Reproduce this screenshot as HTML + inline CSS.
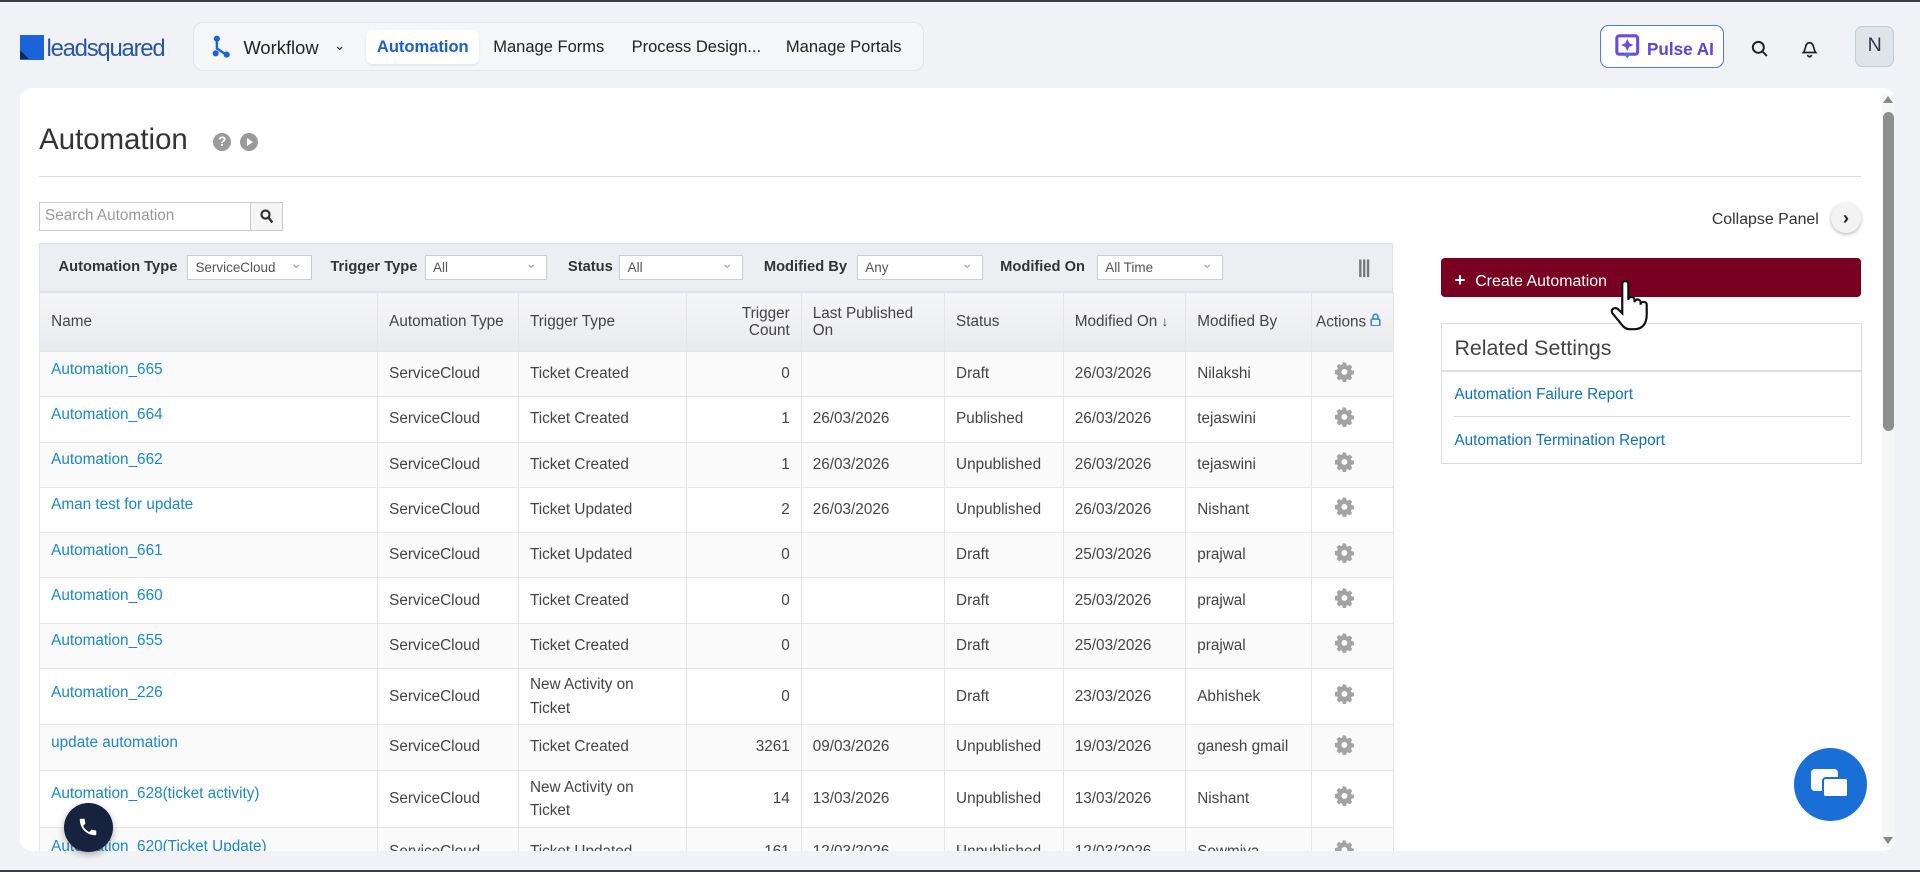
<!DOCTYPE html>
<html><head><meta charset="utf-8">
<style>
*{box-sizing:border-box;margin:0;padding:0}
html,body{width:1920px;height:872px;overflow:hidden;background:#eff1f5}
#w{zoom:1.22449;width:1568px;height:712px;position:relative;font-family:"Liberation Sans",sans-serif;color:#333;background:#f0f2f6;border-top:2px solid #3a3d42;border-bottom:2px solid #3a3d42}
.a{position:absolute}
.nav{left:158px;top:16px;width:597px;height:40px;background:#f5f6f8;border:1px solid #e2e5ea;border-radius:8px}
.nav span{position:absolute;top:12px;font-size:14px;color:#222}
.act{left:140px;top:6px;width:92px;height:28px;background:#fff;border-radius:5px;box-shadow:0 1px 2px rgba(0,0,0,.08)}
.card{left:16px;top:70px;width:1532px;height:623px;background:#fff;border-radius:10px;overflow:hidden}
table{border-collapse:collapse;font-size:12.5px;table-layout:fixed}
td,th{border:1px solid #e6e6e6;padding:0 9px;vertical-align:middle;color:#444;font-weight:normal}
th{background:linear-gradient(#f6f6f8,#e9eaed);height:48px;text-align:left;color:#444;font-size:12.5px}
td{height:37px}
tr:nth-child(even) td{background:#fafafa}
td.n{vertical-align:top;padding-top:7px;color:#1d87c9;padding-left:9px}
td.r{text-align:right}
.g{text-align:left;padding:0 0 0 18px}
.sel{position:absolute;top:9px;height:20px;background:#fff;border:1px solid #ccc;font-size:11px;color:#555;padding:3px 6px}
.sel:after{content:"⌄";position:absolute;right:7px;top:-1px;color:#aaa;font-size:12px}
.lb{position:absolute;top:12px;font-size:12px;font-weight:bold;color:#333}
</style></head><body><div id="w">
<svg width="0" height="0" style="position:absolute"><defs><g id="gear"><path d="M10 1.5l1.6.3.4 2.2 1.3.6 1.9-1.2 2.3 2.3-1.2 1.9.6 1.3 2.2.4v3.4l-2.2.4-.6 1.3 1.2 1.9-2.3 2.3-1.9-1.2-1.3.6-.4 2.2H8.4l-.4-2.2-1.3-.6-1.9 1.2-2.3-2.3 1.2-1.9-.6-1.3-2.2-.4V8.7l2.2-.4.6-1.3-1.2-1.9 2.3-2.3 1.9 1.2 1.3-.6.4-2.2z" fill="#a3a3a3" transform="scale(.85)"/><circle cx="8.5" cy="8.9" r="2.4" fill="#fff"/></g></defs></svg>
<div class="a" style="left:16px;top:27px;width:20px;height:20px;background:#1b64d8"></div>
<div class="a" style="left:16px;top:39px;width:0;height:0;border-left:8px solid #0d2a5a;border-top:8px solid transparent"></div>
<div class="a" style="left:38px;top:27px;font-size:19.5px;color:#2a56a8;letter-spacing:-1px">leadsquared</div>
<div class="a nav">
 <svg class="a" style="left:14px;top:10px" width="16" height="20" viewBox="0 0 16 20"><circle cx="4" cy="3" r="2.5" fill="#1b64d8"/><path d="M4 5v6l6 4" stroke="#1b64d8" stroke-width="2" fill="none"/><circle cx="3" cy="15" r="2.5" fill="#1b64d8"/><circle cx="12" cy="16" r="2.5" fill="#1b64d8"/></svg>
 <span style="left:40px;font-size:15px">Workflow</span><span style="left:114px;font-size:11px;top:13px">⌄</span>
 <div class="a act"></div>
 <span style="left:149px;color:#1a5fd0;font-weight:bold;font-size:13.5px">Automation</span>
 <span style="left:244px;font-size:13.5px">Manage Forms</span>
 <span style="left:357px;font-size:13.5px">Process Design...</span>
 <span style="left:483px;font-size:13.5px">Manage Portals</span>
</div>
<div class="a" style="left:1307px;top:19px;width:101px;height:35px;border:1.5px solid #4a7be0;border-radius:7px;background:#fff"></div>
<svg class="a" style="left:1319px;top:26px" width="20" height="22" viewBox="0 0 20 22"><rect x="1.5" y="1.5" width="17" height="15" rx="2" fill="none" stroke="#6a4ae0" stroke-width="2.5"/><path d="M10 4l1.5 3.5L15 9l-3.5 1.5L10 14l-1.5-3.5L5 9l3.5-1.5z" fill="#6a4ae0"/><path d="M7 16l3 4 3-4" fill="#4a7be0"/></svg>
<div class="a" style="left:1345px;top:30px;font-size:14px;font-weight:bold;color:#5a45d8">Pulse AI</div>
<svg class="a" style="left:1430px;top:31px" width="14" height="14" viewBox="0 0 14 14"><circle cx="6" cy="6" r="4.5" stroke="#222" stroke-width="1.6" fill="none"/><path d="M9.5 9.5L13 13" stroke="#222" stroke-width="1.6"/></svg>
<svg class="a" style="left:1471px;top:30px" width="14" height="16" viewBox="0 0 14 16"><path d="M2 11c2-2 1-8 5-8s3 6 5 8z" stroke="#222" stroke-width="1.4" fill="none"/><path d="M5.5 13a1.5 1.5 0 003 0" stroke="#222" stroke-width="1.4" fill="none"/></svg>
<div class="a" style="left:1515px;top:20px;width:32px;height:33px;background:#dfe4eb;border:1px solid #c4cad3;border-radius:6px;text-align:center;line-height:31px;font-size:16px;color:#334">N</div>

<div class="a card">
 <div class="a" style="left:16px;top:29px;font-size:24px;color:#333">Automation</div>
 <div class="a" style="left:158px;top:37px;width:15px;height:15px;border-radius:50%;background:#9a9a9a;color:#fff;font-size:11px;text-align:center;line-height:15px;font-weight:bold">?</div>
 <div class="a" style="left:180px;top:37px;width:15px;height:15px;border-radius:50%;background:#9a9a9a"></div>
 <div class="a" style="left:186px;top:41px;border-left:5px solid #fff;border-top:3.5px solid transparent;border-bottom:3.5px solid transparent"></div>
 <div class="a" style="left:16px;top:72px;width:1488px;height:1px;background:#ddd"></div>
 <div class="a" style="left:16px;top:93px;width:173px;height:24px;border:1px solid #ccc;font-size:12.5px;color:#999;padding:4px 4px">Search Automation</div>
 <div class="a" style="left:188px;top:93px;width:27px;height:24px;border:1px solid #ccc;background:#f5f5f5"></div>
 <svg class="a" style="left:196px;top:99px" width="11" height="12" viewBox="0 0 11 12"><circle cx="4.5" cy="4.5" r="3.3" stroke="#333" stroke-width="1.8" fill="none"/><path d="M7 7l3 4" stroke="#333" stroke-width="2"/></svg>
 <div class="a" style="left:16px;top:127px;width:1106px;height:40px;background:#eceef1;border:1px solid #dfe1e5">
  <span class="lb" style="left:15px">Automation Type</span><div class="sel" style="left:120px;width:102px">ServiceCloud</div>
  <span class="lb" style="left:237px">Trigger Type</span><div class="sel" style="left:314px;width:100px">All</div>
  <span class="lb" style="left:431px">Status</span><div class="sel" style="left:473px;width:101px">All</div>
  <span class="lb" style="left:591px">Modified By</span><div class="sel" style="left:667px;width:103px">Any</div>
  <span class="lb" style="left:784px">Modified On</span><div class="sel" style="left:863px;width:103px">All Time</div>
  <span class="a" style="left:1076px;top:10px;font-size:15px;color:#777;font-weight:bold;letter-spacing:-1px">|||</span>
 </div>
 <table class="a" style="left:16px;top:167px;width:1106px">
  <colgroup><col style="width:276px"><col style="width:115px"><col style="width:137px"><col style="width:94px"><col style="width:117px"><col style="width:97px"><col style="width:100px"><col style="width:103px"><col style="width:67px"></colgroup>
  <tr><th>Name</th><th>Automation Type</th><th>Trigger Type</th><th style="text-align:right;line-height:14px">Trigger<br>Count</th><th style="line-height:14px">Last Published<br>On</th><th>Status</th><th>Modified On <span style="font-size:11px">↓</span></th><th>Modified By</th><th style="padding:0 3px;white-space:nowrap">Actions <svg width="9" height="11" viewBox="0 0 9 11"><rect x="1" y="5" width="7" height="5.5" rx="1" fill="none" stroke="#3a86d8" stroke-width="1.3"/><path d="M2.5 5V3a2 2 0 014 0v2" fill="none" stroke="#3a86d8" stroke-width="1.3"/></svg></th></tr>
  <tr><td class="n">Automation_665</td><td>ServiceCloud</td><td>Ticket Created</td><td class="r">0</td><td></td><td>Draft</td><td>26/03/2026</td><td>Nilakshi</td><td class="g"><svg width="18" height="18"><use href="#gear"/></svg></td></tr>
  <tr><td class="n">Automation_664</td><td>ServiceCloud</td><td>Ticket Created</td><td class="r">1</td><td>26/03/2026</td><td>Published</td><td>26/03/2026</td><td>tejaswini</td><td class="g"><svg width="18" height="18"><use href="#gear"/></svg></td></tr>
  <tr><td class="n">Automation_662</td><td>ServiceCloud</td><td>Ticket Created</td><td class="r">1</td><td>26/03/2026</td><td>Unpublished</td><td>26/03/2026</td><td>tejaswini</td><td class="g"><svg width="18" height="18"><use href="#gear"/></svg></td></tr>
  <tr><td class="n">Aman test for update</td><td>ServiceCloud</td><td>Ticket Updated</td><td class="r">2</td><td>26/03/2026</td><td>Unpublished</td><td>26/03/2026</td><td>Nishant</td><td class="g"><svg width="18" height="18"><use href="#gear"/></svg></td></tr>
  <tr><td class="n">Automation_661</td><td>ServiceCloud</td><td>Ticket Updated</td><td class="r">0</td><td></td><td>Draft</td><td>25/03/2026</td><td>prajwal</td><td class="g"><svg width="18" height="18"><use href="#gear"/></svg></td></tr>
  <tr><td class="n">Automation_660</td><td>ServiceCloud</td><td>Ticket Created</td><td class="r">0</td><td></td><td>Draft</td><td>25/03/2026</td><td>prajwal</td><td class="g"><svg width="18" height="18"><use href="#gear"/></svg></td></tr>
  <tr><td class="n">Automation_655</td><td>ServiceCloud</td><td>Ticket Created</td><td class="r">0</td><td></td><td>Draft</td><td>25/03/2026</td><td>prajwal</td><td class="g"><svg width="18" height="18"><use href="#gear"/></svg></td></tr>
  <tr><td class="n" style="padding-top:12px;height:46px">Automation_226</td><td>ServiceCloud</td><td style="line-height:19px">New Activity on Ticket</td><td class="r">0</td><td></td><td>Draft</td><td>23/03/2026</td><td>Abhishek</td><td class="g"><svg width="18" height="18"><use href="#gear"/></svg></td></tr>
  <tr><td class="n">update automation</td><td>ServiceCloud</td><td>Ticket Created</td><td class="r">3261</td><td>09/03/2026</td><td>Unpublished</td><td>19/03/2026</td><td>ganesh gmail</td><td class="g"><svg width="18" height="18"><use href="#gear"/></svg></td></tr>
  <tr><td class="n" style="padding-top:12px;height:47px">Automation_628(ticket activity)</td><td>ServiceCloud</td><td style="line-height:19px">New Activity on Ticket</td><td class="r">14</td><td>13/03/2026</td><td>Unpublished</td><td>13/03/2026</td><td>Nishant</td><td class="g"><svg width="18" height="18"><use href="#gear"/></svg></td></tr>
  <tr><td class="n" style="padding-top:8px;height:40px">Automation_620(Ticket Update)</td><td>ServiceCloud</td><td>Ticket Updated</td><td class="r">161</td><td>12/03/2026</td><td>Unpublished</td><td>12/03/2026</td><td style="line-height:18px">Sowmiya</td><td class="g"><svg width="18" height="18"><use href="#gear"/></svg></td></tr>
 </table>
 <div class="a" style="left:1382px;top:101px;font-size:13px;color:#333">Collapse Panel</div>
 <div class="a" style="left:1479px;top:94px;width:25px;height:25px;border-radius:50%;background:#f3f3f3;box-shadow:0 1px 3px rgba(0,0,0,.3);text-align:center;line-height:24px;font-size:15px;font-weight:bold;color:#222">›</div>
 <div class="a" style="left:1161px;top:139px;width:343px;height:32px;background:#780020;border-radius:3px;color:#fff;font-size:13px;padding:9px 11px"><b style="font-size:15px;margin-right:8px">+</b>Create Automation</div>
 <div class="a" style="left:1161px;top:192px;width:344px;height:115px;border:1px solid #ddd">
  <div class="a" style="left:10px;top:10px;font-size:17.5px;color:#444">Related Settings</div>
  <div class="a" style="left:0;top:38px;width:342px;height:1px;background:#ddd"></div>
  <div class="a" style="left:10px;top:51px;font-size:12.5px;color:#1370b8">Automation Failure Report</div>
  <div class="a" style="left:10px;top:75px;width:323px;height:1px;background:#ddd"></div>
  <div class="a" style="left:10px;top:88px;font-size:12.5px;color:#1370b8">Automation Termination Report</div>
 </div>
 <div class="a" style="left:1521px;top:5px;width:11px;height:615px;background:#f6f6f6"></div>
 <div class="a" style="left:1522px;top:20px;width:9px;height:260px;border-radius:5px;background:#8f8f8f"></div>
 <div class="a" style="left:1522px;top:7px;border-bottom:6px solid #888;border-left:4.5px solid transparent;border-right:4.5px solid transparent"></div>
 <div class="a" style="left:1522px;top:612px;border-top:6px solid #888;border-left:4.5px solid transparent;border-right:4.5px solid transparent"></div>
</div>
<svg class="a" style="left:1315px;top:226px" width="34" height="44" viewBox="0 0 34 44"><path d="M10 4c0-3 5-3 5 0v13c0-3 5-3 5 0v2c0-3 5-3 5 0v2c0-3 5-3 5 0v8c0 8-4 12-10 12h-4c-4 0-6-3-9-7L2 28c-2-3 2-6 5-3l3 3z" fill="#fff" stroke="#111" stroke-width="1.8"/></svg>
<div class="a" style="left:1465px;top:609px;width:60px;height:60px;border-radius:50%;background:#1a6fd6"></div>
<div class="a" style="left:1479px;top:626px;width:22px;height:18px;background:#fff;border-radius:3px"></div>
<div class="a" style="left:1488px;top:633px;width:22px;height:17px;background:#fff;border:2px solid #1a6fd6;border-radius:3px"></div>
<div class="a" style="left:52px;top:654px;width:40px;height:40px;border-radius:50%;background:#15233f;box-shadow:0 2px 6px rgba(0,0,0,.3)"></div>
<svg class="a" style="left:63px;top:665px" width="18" height="18" viewBox="0 0 24 24"><path d="M6.6 10.8a15 15 0 006.6 6.6l2.2-2.2c.3-.3.7-.4 1-.2 1.1.4 2.3.6 3.6.6.6 0 1 .4 1 1V20c0 .6-.4 1-1 1A17 17 0 013 4c0-.6.4-1 1-1h3.5c.6 0 1 .4 1 1 0 1.3.2 2.5.6 3.6.1.3 0 .7-.2 1z" fill="#fff"/></svg>
</div></body></html>
